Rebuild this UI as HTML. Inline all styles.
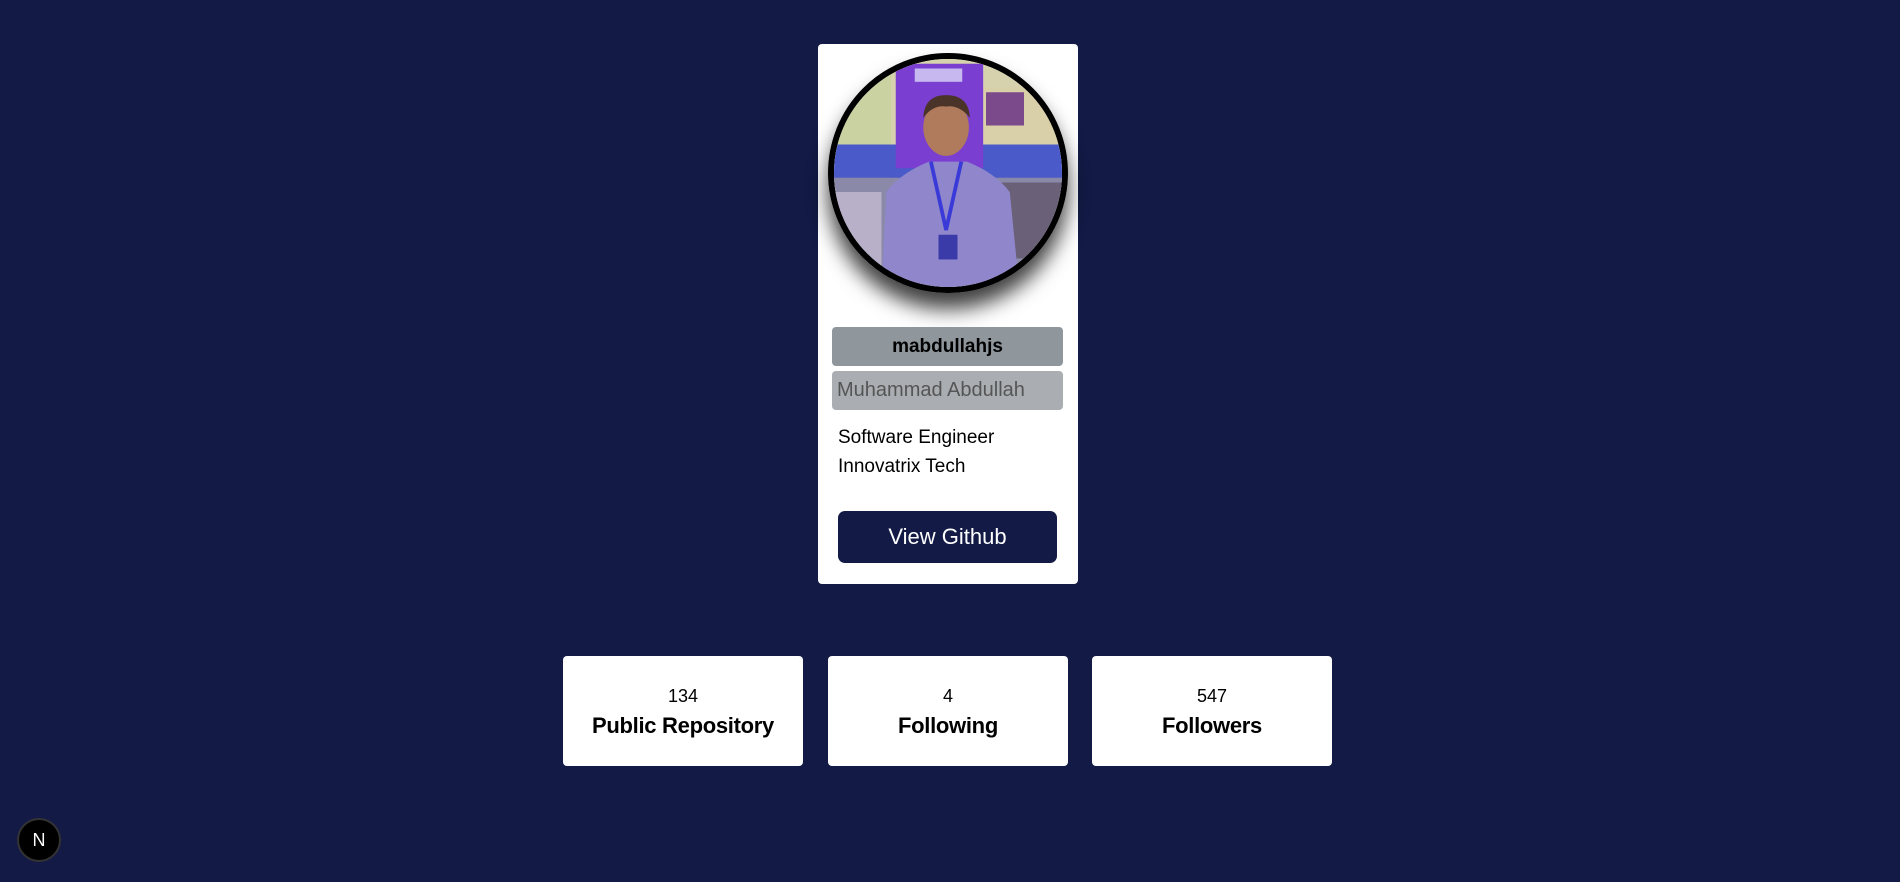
<!DOCTYPE html>
<html><head><meta charset="utf-8"><style>
*{margin:0;padding:0;box-sizing:border-box}
body{width:1900px;height:882px;background:#121a45;font-family:"Liberation Sans","DejaVu Sans",sans-serif;position:relative;overflow:hidden}
.card{position:absolute;left:818px;top:44px;width:260px;height:540px;background:#fff;border-radius:4px}
.av{position:absolute;left:10px;top:9px;width:240px;height:240px;border-radius:50%;border:6px solid #000;overflow:hidden;box-shadow:0 16px 20px rgba(0,0,0,.75)}
.u{position:absolute;left:14px;top:283px;width:231px;height:39px;background:#8f969c;border-radius:4px;text-align:center;font-weight:bold;font-size:19px;line-height:39px;color:#000}
.n{position:absolute;left:14px;top:327px;width:231px;height:39px;background:#aaaeb2;border-radius:4px;font-size:20px;line-height:39px;color:#555;padding-left:5px}
.d{position:absolute;left:20px;top:379px;font-size:19px;line-height:29px;color:#000}
.b{position:absolute;left:20px;top:467px;width:219px;height:52px;background:#121a45;border-radius:7px;color:#fff;font-size:22px;text-align:center;line-height:52px}
.s{position:absolute;top:656px;width:240px;height:110px;background:#fff;border-radius:4px;text-align:center;color:#000}
.s .v{margin-top:29px;font-size:18px;line-height:22px}
.s .l{margin-top:4px;font-size:22px;font-weight:bold;line-height:30px;letter-spacing:-.3px}
.nx{position:absolute;left:17px;top:818px;width:44px;height:44px;border-radius:50%;background:#000;border:2px solid #333;color:#fff;font-size:18px;text-align:center;line-height:40px}
</style></head><body>
<div class="card">
<div class="av"><svg width="228" height="228" viewBox="0 0 240 240">
<rect width="240" height="240" fill="#d6d2ae"/>
<rect x="0" y="0" width="60" height="100" fill="#c9d2a0"/>
<rect x="155" y="30" width="85" height="60" fill="#d9cfa8"/>
<rect x="160" y="35" width="40" height="35" fill="#7a4a8a"/>
<rect x="0" y="90" width="240" height="40" fill="#4a5ac8"/>
<rect x="0" y="125" width="240" height="115" fill="#8a8aa8"/>
<rect x="170" y="130" width="70" height="80" fill="#6a6078"/>
<rect x="0" y="140" width="50" height="100" fill="#b8b0c8"/>
<rect x="65" y="5" width="92" height="110" fill="#7a3fd0"/>
<rect x="85" y="10" width="50" height="14" fill="#c8b8f0"/>
<path d="M50 240 L55 140 Q70 120 100 108 L140 108 Q170 120 185 140 L195 240Z" fill="#8f86cc"/>
<ellipse cx="118" cy="72" rx="24" ry="30" fill="#b07a5c"/>
<path d="M94 62 Q95 38 118 38 Q142 38 143 62 Q132 48 118 50 Q104 48 94 62Z" fill="#4a3328"/>
<path d="M102 108 L118 180 L134 108" stroke="#3a3ad8" stroke-width="4" fill="none"/>
<rect x="110" y="185" width="20" height="26" fill="#3a3aa8"/>
</svg></div>
<div class="u">mabdullahjs</div>
<div class="n">Muhammad Abdullah</div>
<div class="d">Software Engineer<br>Innovatrix Tech</div>
<div class="b">View Github</div>
</div>
<div class="s" style="left:563px"><div class="v">134</div><div class="l">Public Repository</div></div>
<div class="s" style="left:828px"><div class="v">4</div><div class="l">Following</div></div>
<div class="s" style="left:1092px"><div class="v">547</div><div class="l">Followers</div></div>
<div class="nx">N</div>
</body></html>
